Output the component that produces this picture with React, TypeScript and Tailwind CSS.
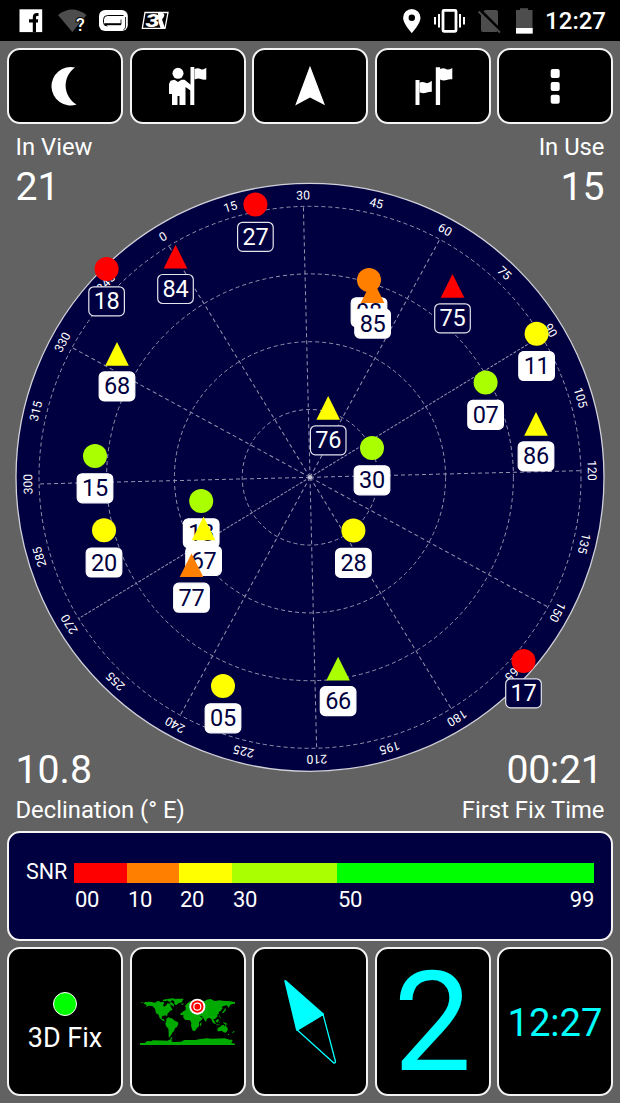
import React from 'react';

interface Satellite {
  id: string;
  x: number;
  y: number;
  color: string;
  glonass?: boolean;
  unused?: boolean;
}

const RED = '#ff0000';
const ORANGE = '#ff8000';
const YELLOW = '#ffff00';
const LIME = '#aaff00';
const NAVY = '#000040';

const CX = 310;
const CY = 477.3;
const HEADING = 31.4;

// drawn in order, later ones cover earlier ones
const satellites: Satellite[] = [
  { id: '27', x: 255.4, y: 204.5, color: RED, unused: true },
  { id: '18', x: 106.6, y: 269, color: RED, unused: true },
  { id: '84', x: 175.5, y: 256.7, color: RED, glonass: true, unused: true },
  { id: '08', x: 369, y: 280, color: ORANGE },
  { id: '85', x: 372.6, y: 291.3, color: ORANGE, glonass: true },
  { id: '75', x: 452.5, y: 286, color: RED, glonass: true, unused: true },
  { id: '11', x: 536.6, y: 333.7, color: YELLOW },
  { id: '07', x: 485.6, y: 382.6, color: LIME },
  { id: '86', x: 536, y: 424.1, color: YELLOW, glonass: true },
  { id: '76', x: 328.2, y: 408, color: YELLOW, glonass: true, unused: true },
  { id: '30', x: 372, y: 448, color: LIME },
  { id: '28', x: 353.4, y: 530.6, color: YELLOW },
  { id: '15', x: 95, y: 456, color: LIME },
  { id: '68', x: 117, y: 354.1, color: YELLOW, glonass: true },
  { id: '20', x: 104, y: 530.2, color: YELLOW },
  { id: '13', x: 201.2, y: 501, color: LIME },
  { id: '67', x: 203.6, y: 528.5, color: YELLOW, glonass: true },
  { id: '77', x: 191.5, y: 565.4, color: ORANGE, glonass: true },
  { id: '05', x: 223, y: 686, color: YELLOW },
  { id: '66', x: 338.1, y: 668.8, color: LIME, glonass: true },
  { id: '17', x: 523.5, y: 661, color: RED, unused: true },
];

const snrBands = [
  { label: '00', width: 'w-[53px]', color: 'bg-[#ff0000]' },
  { label: '10', width: 'w-[52px]', color: 'bg-[#ff8000]' },
  { label: '20', width: 'w-[53px]', color: 'bg-[#ffff00]' },
  { label: '30', width: 'w-[105px]', color: 'bg-[#aaff00]' },
  { label: '50', width: 'w-[257px]', color: 'bg-[#00ff00]' },
];

const SatelliteMarker: React.FC<{ sat: Satellite }> = ({ sat }) => (
  <g transform={`translate(${sat.x} ${sat.y})`}>
    {sat.glonass ? (
      <path d="M0-12 11.8 11.7H-11.8Z" fill={sat.color} />
    ) : (
      <circle r="12" fill={sat.color} />
    )}
    <rect
      x="-17.8"
      y="17.8"
      width="35.6"
      height="29"
      rx="5"
      fill={sat.unused ? NAVY : '#fff'}
      stroke={sat.unused ? '#e4e4ec' : '#fff'}
      strokeWidth="1.2"
    />
    <text y="40.4" textAnchor="middle" fontSize="23.5" letterSpacing="-0.3" fill={sat.unused ? '#fff' : NAVY}>
      {sat.id}
    </text>
  </g>
);

const SkyPlot: React.FC = () => {
  const labels = Array.from({ length: 24 }, (_, i) => i * 15);
  const spokes = labels.filter((deg) => deg % 30 === 0);

  return (
    <svg
      className="absolute left-0 top-0 h-[706px] w-[620px]"
      viewBox="0 124 620 706"
      fontFamily="Roboto, sans-serif"
    >
      <circle cx={CX} cy={CY} r="294" fill={NAVY} stroke="#d0d0d8" strokeWidth="1.3" />
      <g fill="none" stroke="#9494ae" strokeWidth="1">
        {[67.8, 135.6, 203.4, 271].map((r) => (
          <circle key={r} cx={CX} cy={CY} r={r} strokeDasharray="4 3" />
        ))}
        {spokes.map((deg) => (
          <line
            key={deg}
            x1={CX}
            y1={CY}
            x2={CX}
            y2={CY - 271}
            strokeDasharray={deg === 90 || deg === 270 ? '3 1.5' : '4 3'}
            transform={`rotate(${deg - HEADING} ${CX} ${CY})`}
          />
        ))}
      </g>
      <circle cx={CX} cy={CY} r="2" fill="#c8c8d4" />
      {labels.map((deg) => (
        <text
          key={deg}
          x={CX}
          y="199.5"
          fontSize="12.2"
          textAnchor="middle"
          fill="#fff"
          transform={`rotate(${deg - HEADING} ${CX} ${CY})`}
        >
          {deg}
        </text>
      ))}
      {satellites.map((sat) => (
        <SatelliteMarker key={sat.id} sat={sat} />
      ))}
    </svg>
  );
};

const StatusBar: React.FC = () => (
  <header className="flex h-[41px] items-center justify-between bg-black">
    <svg className="h-[41px] w-[180px]" viewBox="0 0 180 41">
      <rect x="19.5" y="9.3" width="22.7" height="22.8" fill="#fff" />
      <path d="M38.5 14.5H37q-2.6 0-2.6 2.8V32M29 20.8h9" fill="none" stroke="#000" strokeWidth="3.2" />
      <path d="M58 15q14-11 28.5 0L72.3 32Z" fill="#4d4d4d" />
      <text
        x="76"
        y="31"
        fontSize="18"
        fontWeight="500"
        fontFamily="Roboto, sans-serif"
        fill="#fff"
        stroke="#000"
        strokeWidth="2"
        paintOrder="stroke"
      >
        ?
      </text>
      <rect x="99" y="10" width="28.8" height="21" rx="6" fill="#fff" />
      <path
        d="M123.500 15.500h-16q-4 0-4 4v3q0 3.500 4 3.500"
        fill="none"
        stroke="#000"
        strokeWidth="1"
      />
      <path d="M104.500 24.200H121" fill="none" stroke="#000" strokeWidth="2" />
      <path d="M125.500 17v10q0 2-2 2.500M121 19.500v5" fill="none" stroke="#000" strokeWidth="0.800" />
      <path d="M145 12.500h23l-3 15.800h-22.700Z" fill="#000" stroke="#fff" strokeWidth="1.300" />
      <path d="M158 13h4.500q2.500.5 1.500 3.500l-2 3 3 8.500h-4.500l-2-6Z" fill="#fff" />
      <text
        transform="translate(145.500 27.300) scale(1.350 1)"
        fontSize="18.500"
        fontWeight="900"
        fontStyle="italic"
        fontFamily="Roboto, sans-serif"
        fill="#fff"
      >
        3
      </text>
    </svg>
    <div className="flex items-center pr-[14px]">
      <svg className="h-[41px] w-[149px]" viewBox="396 0 149 41">
        <path
          fillRule="evenodd"
          d="M411.8 9a8.700 8.700 0 0 0-8.700 8.700c0 6.300 8.700 15.300 8.700 15.300s8.700-9 8.700-15.300a8.700 8.700 0 0 0-8.700-8.700Zm0 5.500a3.200 3.200 0 1 1 0 6.400 3.200 3.200 0 0 1 0-6.400Z"
          fill="#fff"
        />
        <rect x="443" y="10.300" width="13" height="21" rx="1" fill="none" stroke="#fff" strokeWidth="2.800" />
        <path d="M439 14v13.500M435 17v7.500M460 14v13.500M464 17v7.500" stroke="#fff" strokeWidth="2" />
        <path d="M485 10h11q2 0 2 2v18q0 2-2 2h-13q-2 0-2-2V14Z" fill="#4d4d4d" />
        <path d="M480 10 501 31" stroke="#000" strokeWidth="3" />
        <path d="M478.500 11.500 500 32.500" stroke="#4d4d4d" strokeWidth="1.800" />
        <path d="M516 10h4V8.200h8V10h4.500v24H516Z" fill="#4d4d4d" />
        <path d="M516 28h16.700v5.500H516Z" fill="#fff" />
      </svg>
      <span className="mt-[2px] whitespace-nowrap text-[24px] font-medium leading-[41px]">12:27</span>
    </div>
  </header>
);

const Tile: React.FC<{ children: React.ReactNode }> = ({ children }) => (
  <div className="flex flex-col items-center justify-center overflow-hidden rounded-[13px] border-2 border-[#f4f4f4] bg-black">
    {children}
  </div>
);

const Toolbar: React.FC = () => (
  <nav className="grid h-[76px] grid-cols-5 gap-[6.5px]">
    <Tile>
      <svg className="h-[76px] w-[116px] shrink-0" viewBox="7 48 116 76" fill="#fff">
        <path d="M75 67.500A19.200 19.200 0 1 0 76.500 104.500A22 22 0 0 1 75 67.500Z" />
      </svg>
    </Tile>
    <Tile>
      <svg className="h-[76px] w-[116px] shrink-0" viewBox="129.500 48 116 76" fill="#fff">
        <circle cx="177.500" cy="73.300" r="5.500" />
        <path d="M174 79.800 177.500 82 181 79.800h3l7.500 6V67h2.300v38H190V90.500l-5-3.500V105h-6V96h-2v9h-5.500V94h-3V84l1.500-3.300Z" />
        <path d="M190 67h3.500v38H190Z" />
        <path d="M194 69q3.500-1.500 6 0t5.800-1.200V79.500q-3 .5-5.500-.5T194 79.500Z" />
      </svg>
    </Tile>
    <Tile>
      <svg className="h-[76px] w-[116px] shrink-0" viewBox="252 48 116 76" fill="#fff">
        <path d="M310 65.800 325 105.200 310 97.500 295.200 105.500Z" />
      </svg>
    </Tile>
    <Tile>
      <svg className="h-[76px] w-[116px] shrink-0" viewBox="374.500 48 116 76" fill="#fff">
        <path d="M415 80h4v25h-4ZM435.300 67.300h4.300V105h-4.300Z" />
        <path d="M419 82.500q3.500-1 6 .3t6.300-2V91.800q-3.300 0-5.800 1t-6.500-.5ZM439.500 69q3.500-1.500 6 0t6.300-1V79.300q-3-.5-5.800.7t-6.500-.5Z" />
      </svg>
    </Tile>
    <Tile>
      <svg className="h-[76px] w-[116px] shrink-0" viewBox="497 48 116 76" fill="#fff">
        <rect x="550.700" y="69" width="9" height="9" rx="2" />
        <rect x="550.700" y="82" width="9" height="9" rx="2" />
        <rect x="550.700" y="94.800" width="9" height="9" rx="2" />
      </svg>
    </Tile>
  </nav>
);

const SnrLegend: React.FC = () => (
  <div className="flex h-[110px] rounded-[13px] border-2 border-[#f4f4f4] bg-[#000040] pl-[17px] pt-[30px]">
    <span className="mt-[-6px] w-[48px] text-[21.5px] leading-[30px]">SNR</span>
    <div className="relative flex">
      {snrBands.map((band) => (
        <div key={band.label} className={band.width}>
          <div className={`h-[20px] ${band.color}`} />
          <span className="ml-px mt-[3px] block text-[22px] leading-[28px] tracking-[-0.3px]">{band.label}</span>
        </div>
      ))}
      <span className="absolute right-0 top-[23px] text-[22px] leading-[28px] tracking-[-0.3px]">99</span>
    </div>
  </div>
);

const WorldMap: React.FC = () => (
  <svg className="mb-[5px] h-[80px] w-[115px] shrink-0" viewBox="0 0 345 240">
    <g fill="#00aa00">
      <path d="M30 69h8l3 4 5-4 15-1 14 3 6-4 7-1 2 4 9-2 4 5-4 4 3 6 7-4 4-7 7 4 3 8 5 8-7 3-4 5-5 4-3 9-2-4-7 1-5 3 1 7 6 0 1 5 5 3-5-1-9-5-5-5-4-11-4 0-4-7-2-10-8-8-11-1-8 4 2-6-6-2-4-4Z" />
      <path d="M99 63l9-3 6 2-5 4-10 1ZM112 60l16-2h7l-8 4-6 6-8-1ZM119 69l8 2 5 6 0 6-7-4-6-4ZM130 61l11-2 20 0-3 5-2 6-9 2-9 7-5-4 0-8-7-4Z" />
      <path d="M101 106l8-1 7 4-9-1ZM109 119l6-4 6 2 7 2 4 5 12 6 1 5-4 9-6 4-3 8-5 5-4 8-3 3 2 5-6-4 0-15-1-9-7-8-2-7 3-8Z" />
      <path d="M154 74l7-1-2 4-5 0ZM167 85l5-3 0 7-5 1ZM172 73l8-6 10-2 17 3 8-3 10 1 5-4 12-2 12 6 15-2 14 2 13 0 19 3v5l-9 1-6 4-4 8-5-8-8 1-8 4 3 4-7 9-5 2 1 6-5 0 1 7-7 7-6 1 4 7-1 8-6-7-3-8-7-4-7 5-2 9-5-8-5-9-7-2-7-2 4 5 7 0-4 7-9 5-8-14-9-2-7-3-6 3-9-3-10 2-3-4 5-4 5-4 7-4 2-8-5-3Z" />
      <path d="M166 96l14-2 4 4 14-1 8 4 7 15 7-1-5 8-8 7 0 12-6 5-6 9-7-1-5-15 1-9-4-7-14-1-6-7 0-9Z" />
      <path d="M209 135l5-6 0 8-4 6ZM245 121l6 4 7 9-3 1-9-10ZM257 125l7-5 3 2-3 8-6 0ZM260 136l10 1-1 2-10-1ZM268 126l3 7-3-1ZM278 130l8 1 8 5-8 1ZM266 106l4 6 3 7-4-4ZM282 93l4-6 2 6-7 8-6 2Z" />
      <path d="M263 147l8-4 4-4 7-1 1 5 3-6 4 7 4 5-2 7-5 5-7-1-4-5-8 2-6 0Z" />
      <path d="M307 160l5-4 2 2-6 5ZM294 165h3v3h-3ZM123 176l4-3 0 3-4 3Z" />
      <path d="M30 192h14l8-6 12 1 4-3 45 1 8-4 7 1-5 5 8 2 22-1 10-5 33 0 15-3 20-2 14 1 40-1 14 4 8 0 0 6-4 4 12 2v4H30Z" />
      <path d="M119 180l6-3 1 3Z" />
    </g>
    <circle cx="202" cy="83" r="24" fill="#fff" />
    <circle cx="202" cy="83" r="18.500" fill="#f00" />
    <circle cx="202" cy="83" r="10.500" fill="none" stroke="#fff" strokeWidth="3.500" />
  </svg>
);

const BottomTiles: React.FC = () => (
  <div className="grid h-[149px] grid-cols-5 gap-[6.5px]">
    <Tile>
      <div className="mt-[3px] h-[24px] w-[24px] rounded-full border-[1.5px] border-white bg-[#00ff00]" />
      <span className="mt-[5px] whitespace-nowrap text-[27px] leading-[34px]">3D Fix</span>
    </Tile>
    <Tile>
      <WorldMap />
    </Tile>
    <Tile>
      <svg className="h-[149px] w-[116px] shrink-0" viewBox="252 947 116 149" stroke="#00ffff" strokeLinejoin="round">
        <path d="M285.300 981 323 1014.200 297 1029.800Z" fill="#00ffff" strokeWidth="2" />
        <path d="M297 1029.800 323 1014.200 335.500 1061.500q0 2-2 1.300Z" fill="none" strokeWidth="1.300" />
      </svg>
    </Tile>
    <Tile>
      <span className="mt-[3px] text-[139px] leading-[140px] text-[#00ffff]">2</span>
    </Tile>
    <Tile>
      <span className="mt-[3px] whitespace-nowrap text-[38.2px] leading-[46px] text-[#00ffff]">12:27</span>
    </Tile>
  </div>
);

const App: React.FC = () => (
  <div className="flex h-[1103px] w-[620px] flex-col overflow-hidden bg-[#626262] font-[Roboto,sans-serif] text-white">
    <StatusBar />
    <div className="px-[7px] pt-[7px]">
      <Toolbar />
    </div>
    <section className="relative flex h-[707px] flex-col justify-between">
      <SkyPlot />
      <div className="relative flex justify-between px-[15.5px] pt-[9px]">
        <div>
          <p className="text-[23.8px] leading-[28px]">In View</p>
          <p className="text-[39.2px] leading-[52px]">21</p>
        </div>
        <div className="text-right">
          <p className="text-[23.8px] leading-[28px]">In Use</p>
          <p className="text-[39.2px] leading-[52px]">15</p>
        </div>
      </div>
      <div className="relative flex justify-between px-[15.5px] pb-[6px]">
        <div>
          <p className="text-[39.2px] leading-[50px]">10.8</p>
          <p className="text-[23.8px] leading-[30px]">Declination (° E)</p>
        </div>
        <div className="text-right">
          <p className="pr-[2px] text-[39.2px] leading-[50px] tracking-[-0.3px]">00:21</p>
          <p className="text-[23.8px] leading-[30px]">First Fix Time</p>
        </div>
      </div>
    </section>
    <div className="flex flex-col gap-[6px] px-[7px]">
      <SnrLegend />
      <BottomTiles />
    </div>
  </div>
);

export default App;
